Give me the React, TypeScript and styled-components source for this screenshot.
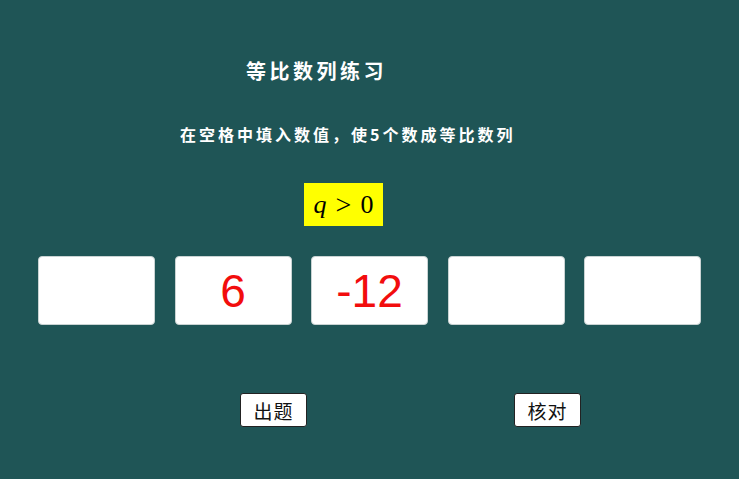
import React from "react";
import styled, { createGlobalStyle } from "styled-components";

const Global = createGlobalStyle`
  html, body { margin: 0; padding: 0; background: #1f5556; }
  body { font-family: "Noto Sans CJK SC", "Noto Sans", sans-serif; }
`;

const Page = styled.div`
  width: 739px;
  height: 479px;
  background: #1f5556;
  display: flex;
  flex-direction: column;
  align-items: flex-start;
  overflow: hidden;
`;

const Title = styled.h1`
  margin: 57px 0 0 246px;
  font-family: "Noto Sans CJK SC", sans-serif;
  font-weight: 700;
  font-size: 20px;
  line-height: 28px;
  letter-spacing: 3.5px;
  color: #ffffff;
`;

const Subtitle = styled.p`
  margin: 38px 0 0 180px;
  font-family: "Noto Sans CJK SC", sans-serif;
  font-weight: 700;
  font-size: 16px;
  line-height: 22px;
  letter-spacing: 3px;
  color: #ffffff;
`;

const Condition = styled.div`
  margin: 38px 0 0 304px;
  width: 79px;
  height: 43px;
  background: #ffff00;
  display: flex;
  align-items: center;
  justify-content: center;
  font-family: "Liberation Serif", "DejaVu Serif", serif;
  font-size: 26px;
  color: #000;
  gap: 9px;
`;

const Var = styled.i`
  font-style: italic;
`;

const Rel = styled.span`
  font-size: 28px;
  line-height: 1;
`;

const Row = styled.div`
  margin: 30px 0 0 38px;
  display: flex;
  gap: 19.5px;
`;

const Cell = styled.div`
  width: 117px;
  height: 69px;
  box-sizing: border-box;
  background: #ffffff;
  border: 1px solid #c9d3d3;
  border-radius: 4px;
  display: flex;
  align-items: center;
  justify-content: center;
  font-family: "Liberation Sans", Arial, sans-serif;
  font-size: 46px;
  color: #f20d0d;
`;

const Buttons = styled.div`
  margin: 68px 0 0 240px;
  display: flex;
  gap: 207px;
`;

const Button = styled.button`
  width: 67px;
  height: 34px;
  box-sizing: border-box;
  background: #ffffff;
  border: 1px solid #222;
  border-radius: 3px;
  padding: 0;
  font-family: "Noto Sans CJK SC", sans-serif;
  font-size: 19px;
  letter-spacing: 1px;
  color: #111;
  cursor: pointer;
`;

const values = ["", "6", "-12", "", ""];

export default function App() {
  return (
    <>
      <Global />
      <Page>
        <Title>等比数列练习</Title>
        <Subtitle>在空格中填入数值，使5个数成等比数列</Subtitle>
        <Condition>
          <Var>q</Var>
          <Rel>&gt;</Rel>
          <span>0</span>
        </Condition>
        <Row>
          {values.map((v, i) => (
            <Cell key={i}>{v}</Cell>
          ))}
        </Row>
        <Buttons>
          <Button>出题</Button>
          <Button>核对</Button>
        </Buttons>
      </Page>
    </>
  );
}
